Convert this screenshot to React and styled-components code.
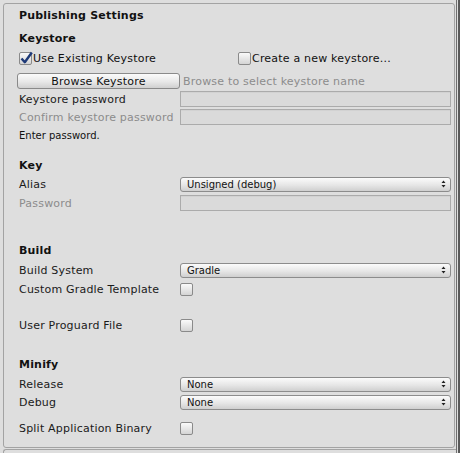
import React from "react";
import styled, { createGlobalStyle } from "styled-components";

const GlobalStyle = createGlobalStyle`
  html, body {
    margin: 0;
    padding: 0;
    background: #dedede;
  }
  body {
    font-family: "DejaVu Sans", Verdana, sans-serif;
    font-size: 11px;
    letter-spacing: 0.2px;
    color: #111;
  }
`;

const Page = styled.div`
  display: flex;
  width: 460px;
  height: 453px;
  overflow: hidden;
`;

const Main = styled.div`
  width: 455px;
  display: flex;
  flex-direction: column;
`;

const ScrollEdge = styled.div`
  width: 5px;
  display: flex;
  gap: 1px;
  padding-left: 1px;
  & > div {
    width: 1px;
    background: #6f6f6f;
  }
  & > div + div {
    width: 2px;
    background: #5a5a5a;
  }
`;

const Panel = styled.div`
  margin: 3px 0 0 3px;
  width: 432px;
  height: 441px;
  border: 1px solid #a3a3a3;
  border-radius: 3px;
  padding: 2px 3px 0 15px;
  display: flex;
  flex-direction: column;
`;

const NextPanel = styled.div`
  margin: 1px 0 0 3px;
  width: 452px;
  flex: 1;
  border-top: 1px solid #a3a3a3;
  border-left: 1px solid #a3a3a3;
  border-radius: 3px 0 0 0;
`;

const Row = styled.div`
  display: flex;
  align-items: center;
  height: 18px;
  margin-top: ${({ $mt }) => $mt || 0}px;
  flex-shrink: 0;
`;

const Header = styled(Row)`
  font-weight: bold;
  letter-spacing: 0.2px;
  color: #111;
`;

const Label = styled.div`
  width: 161px;
  flex-shrink: 0;
  white-space: nowrap;
  color: ${({ $dim }) => ($dim ? "#8c8c8c" : "#1a1a1a")};
`;

const Help = styled(Row)`
  font-size: 10px;
  letter-spacing: 0;
  color: #111;
`;

const Field = styled.div`
  flex: 1;
  height: 16px;
  box-sizing: border-box;
  border: 1px solid #ababab;
  background: #dadada;
  box-shadow: inset 0 1px 0 #d2d2d2;
`;

const Popup = styled.div`
  flex: 1;
  height: 15px;
  box-sizing: border-box;
  border: 1px solid #8c8c8c;
  border-radius: 3px;
  background: linear-gradient(#fbfbfb, #e6e6e6 55%, #cfcfcf);
  display: flex;
  align-items: center;
  justify-content: space-between;
  padding: 0 4px 0 6px;
  font-size: 10px;
  color: #111;
  letter-spacing: 0;
`;

const Button = styled.div`
  width: 163px;
  height: 16px;
  box-sizing: border-box;
  border: 1px solid #8a8a8a;
  border-radius: 3px;
  background: linear-gradient(#fbfbfb, #e8e8e8 55%, #d0d0d0);
  display: flex;
  align-items: center;
  justify-content: center;
  margin-left: -2px;
  color: #111;
`;

const Hint = styled.div`
  margin-left: 3px;
  color: #8c8c8c;
`;

const Box = styled.div`
  width: 13px;
  height: 13px;
  box-sizing: border-box;
  border: 1px solid #8a8a8a;
  border-radius: 2px;
  background: linear-gradient(#fafafa, #d4d4d4);
  position: relative;
  flex-shrink: 0;
  & svg {
    position: absolute;
    left: 0;
    top: -2px;
  }
`;

const CheckText = styled.div`
  margin-left: 1px;
  white-space: nowrap;
  width: ${({ $w }) => ($w ? `${$w}px` : "auto")};
`;

const Check = ({ checked }) => (
  <Box>
    {checked && (
      <svg width="13" height="14" viewBox="0 0 13 14">
        <path d="M1.5 7.5 L4.8 11.2 L11.8 1.5" fill="none" stroke="#1e3a78" strokeWidth="2.4" strokeLinejoin="round" />
      </svg>
    )}
  </Box>
);

const Arrows = () => (
  <svg width="5" height="8" viewBox="0 0 5 8">
    <path d="M2.5 0.5 L4.5 3 L0.5 3 Z M0.5 5 L4.5 5 L2.5 7.5 Z" fill="#222" />
  </svg>
);

const Select = ({ value }) => (
  <Popup>
    <span>{value}</span>
    <Arrows />
  </Popup>
);

export default function App() {
  return (
    <Page>
      <GlobalStyle />
      <Main>
        <Panel>
          <Header>Publishing Settings</Header>
          <Header $mt={5}>Keystore</Header>
          <Row $mt={2}>
            <Check checked />
            <CheckText $w={205}>Use Existing Keystore</CheckText>
            <Check />
            <CheckText>Create a new keystore...</CheckText>
          </Row>
          <Row $mt={5}>
            <Button>Browse Keystore</Button>
            <Hint>Browse to select keystore name</Hint>
          </Row>
          <Row>
            <Label>Keystore password</Label>
            <Field />
          </Row>
          <Row>
            <Label $dim>Confirm keystore password</Label>
            <Field />
          </Row>
          <Help>Enter password.</Help>

          <Header $mt={12}>Key</Header>
          <Row $mt={1}>
            <Label>Alias</Label>
            <Select value="Unsigned (debug)" />
          </Row>
          <Row $mt={1}>
            <Label $dim>Password</Label>
            <Field />
          </Row>

          <Header $mt={29}>Build</Header>
          <Row $mt={2}>
            <Label>Build System</Label>
            <Select value="Gradle" />
          </Row>
          <Row $mt={1}>
            <Label>Custom Gradle Template</Label>
            <Check />
          </Row>
          <Row $mt={18}>
            <Label>User Proguard File</Label>
            <Check />
          </Row>

          <Header $mt={21}>Minify</Header>
          <Row $mt={2}>
            <Label>Release</Label>
            <Select value="None" />
          </Row>
          <Row>
            <Label>Debug</Label>
            <Select value="None" />
          </Row>
          <Row $mt={8}>
            <Label>Split Application Binary</Label>
            <Check />
          </Row>
        </Panel>
        <NextPanel />
      </Main>
      <ScrollEdge>
        <div />
        <div />
      </ScrollEdge>
    </Page>
  );
}
